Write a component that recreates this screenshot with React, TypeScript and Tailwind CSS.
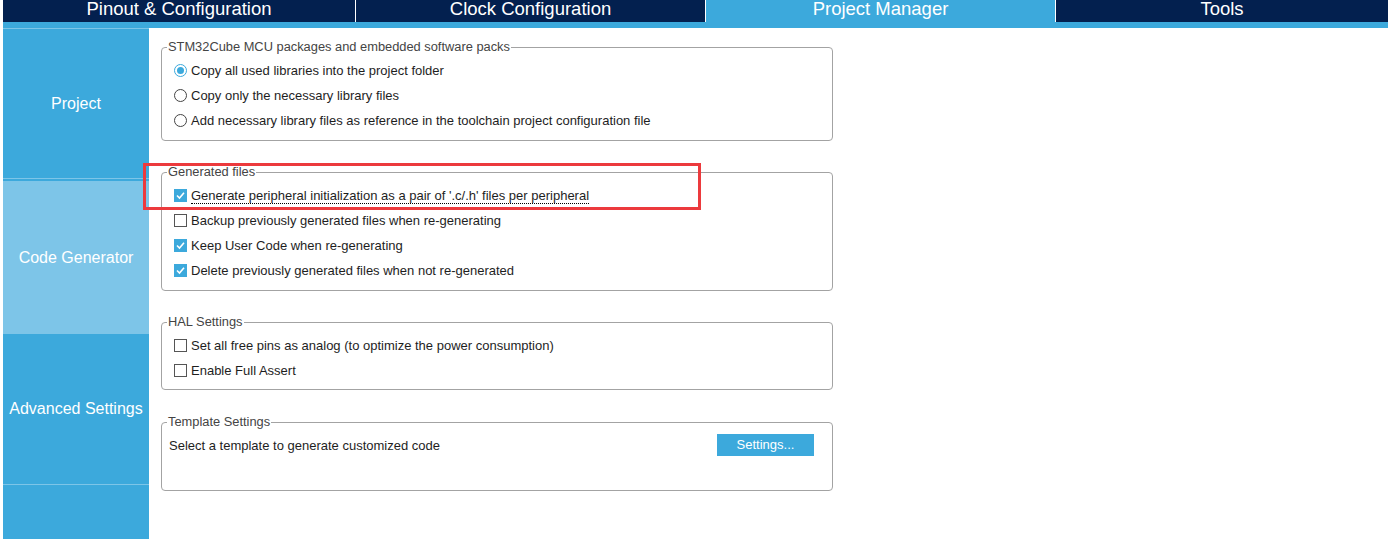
import React from "react";

const FONT = { fontFamily: '"Liberation Sans", Arial, sans-serif' };

function Radio({ checked }: { checked?: boolean }) {
  return (
    <span
      className={
        "flex h-[13px] w-[13px] shrink-0 items-center justify-center rounded-full border bg-white " +
        (checked ? "border-[#3ca9dc]" : "border-[#444]")
      }
    >
      {checked && <span className="h-[7px] w-[7px] rounded-full bg-[#3ca9dc]" />}
    </span>
  );
}

function Check({ checked }: { checked?: boolean }) {
  if (checked)
    return (
      <span className="flex h-[13px] w-[13px] shrink-0 items-center justify-center bg-[#3ca9dc]">
        <svg width="13" height="13" viewBox="0 0 13 13">
          <polyline points="3,6.5 5.5,9 10,3.8" fill="none" stroke="#fff" strokeWidth="1.6" />
        </svg>
      </span>
    );
  return <span className="h-[13px] w-[13px] shrink-0 border border-[#555] bg-white" />;
}

function Row({ children, label, focus }: { children: React.ReactNode; label: string; focus?: boolean }) {
  return (
    <div className="flex h-[25px] items-center pl-[12px]">
      {children}
      <span
        className={
          "ml-[4px] text-[13px] leading-[15px] text-[#1e1e1e] " +
          (focus ? "border-b border-dotted border-black" : "")
        }
      >
        {label}
      </span>
    </div>
  );
}

function Group({
  title,
  children,
  className = "",
}: {
  title: string;
  children: React.ReactNode;
  className?: string;
}) {
  return (
    <fieldset className={"w-[672px] rounded-[4px] border border-[#a3a3a3] px-0 pt-[4px] " + className}>
      <legend className="ml-[5px] px-[1px] text-[12.85px] leading-[14px] text-[#444]">{title}</legend>
      {children}
    </fieldset>
  );
}

export default function App() {
  return (
    <div className="relative flex h-[539px] w-[1388px] flex-col overflow-hidden bg-white pl-[3px]" style={FONT}>
      {/* Top tabs */}
      <div className="flex h-[22px] shrink-0 bg-[#03204f] text-[18.5px] leading-[18px] text-white">
        <div className="flex w-[352px] justify-center">Pinout &amp; Configuration</div>
        <div className="w-px bg-white" />
        <div className="flex w-[349px] justify-center">Clock Configuration</div>
        <div className="w-px bg-white" />
        <div className="flex w-[349px] justify-center bg-[#3ca9dc]">Project Manager</div>
        <div className="w-px bg-white" />
        <div className="flex flex-1 justify-center">Tools</div>
      </div>
      <div className="h-[6px] shrink-0 bg-[#3ca9dc]" />

      <div className="flex flex-1">
        {/* Sidebar */}
        <div className="flex w-[146px] flex-col border-t border-[#7dc5e8] bg-[#3ca9dc] text-[16px] text-white">
          <div className="flex h-[150px] items-center justify-center border-b border-[#7dc5e8]">Project</div>
          <div className="flex h-[155px] items-center justify-center border-t-2 border-[#3ca9dc] bg-[#7dc5e8]">
            Code Generator
          </div>
          <div className="flex h-[151px] items-center justify-center border-b border-[#7dc5e8]">
            Advanced Settings
          </div>
          <div className="flex-1" />
        </div>

        {/* Content */}
        <div className="flex flex-1 flex-col pl-[12px] pt-[12px]">
          <Group title="STM32Cube MCU packages and embedded software packs" className="pb-[7px]">
            <Row label="Copy all used libraries into the project folder">
              <Radio checked />
            </Row>
            <Row label="Copy only the necessary library files">
              <Radio />
            </Row>
            <Row label="Add necessary library files as reference in the toolchain project configuration file">
              <Radio />
            </Row>
          </Group>

          <Group title="Generated files" className="mt-[24px] pb-[7px]">
            <Row label="Generate peripheral initialization as a pair of '.c/.h' files per peripheral" focus>
              <Check checked />
            </Row>
            <Row label="Backup previously generated files when re-generating">
              <Check />
            </Row>
            <Row label="Keep User Code when re-generating">
              <Check checked />
            </Row>
            <Row label="Delete previously generated files when not re-generated">
              <Check checked />
            </Row>
          </Group>

          <Group title="HAL Settings" className="mt-[24px] pb-[6px]">
            <Row label="Set all free pins as analog (to optimize the power consumption)">
              <Check />
            </Row>
            <Row label="Enable Full Assert">
              <Check />
            </Row>
          </Group>

          <Group title="Template Settings" className="mt-[25px] pb-[33px]">
            <div className="flex h-[24px] items-center justify-between pl-[7px] pr-[18px]">
              <span className="text-[13px] leading-[15px] text-[#1e1e1e]">
                Select a template to generate customized code
              </span>
              <button className="flex h-[22px] w-[97px] items-center justify-center bg-[#3ca9dc] text-[13px] text-white">
                Settings...
              </button>
            </div>
          </Group>
        </div>
      </div>

      {/* Red annotation box */}
      <div className="pointer-events-none absolute left-[143px] top-[163px] h-[47px] w-[558px] border-[3px] border-[#ec3a3d]" />
    </div>
  );
}
